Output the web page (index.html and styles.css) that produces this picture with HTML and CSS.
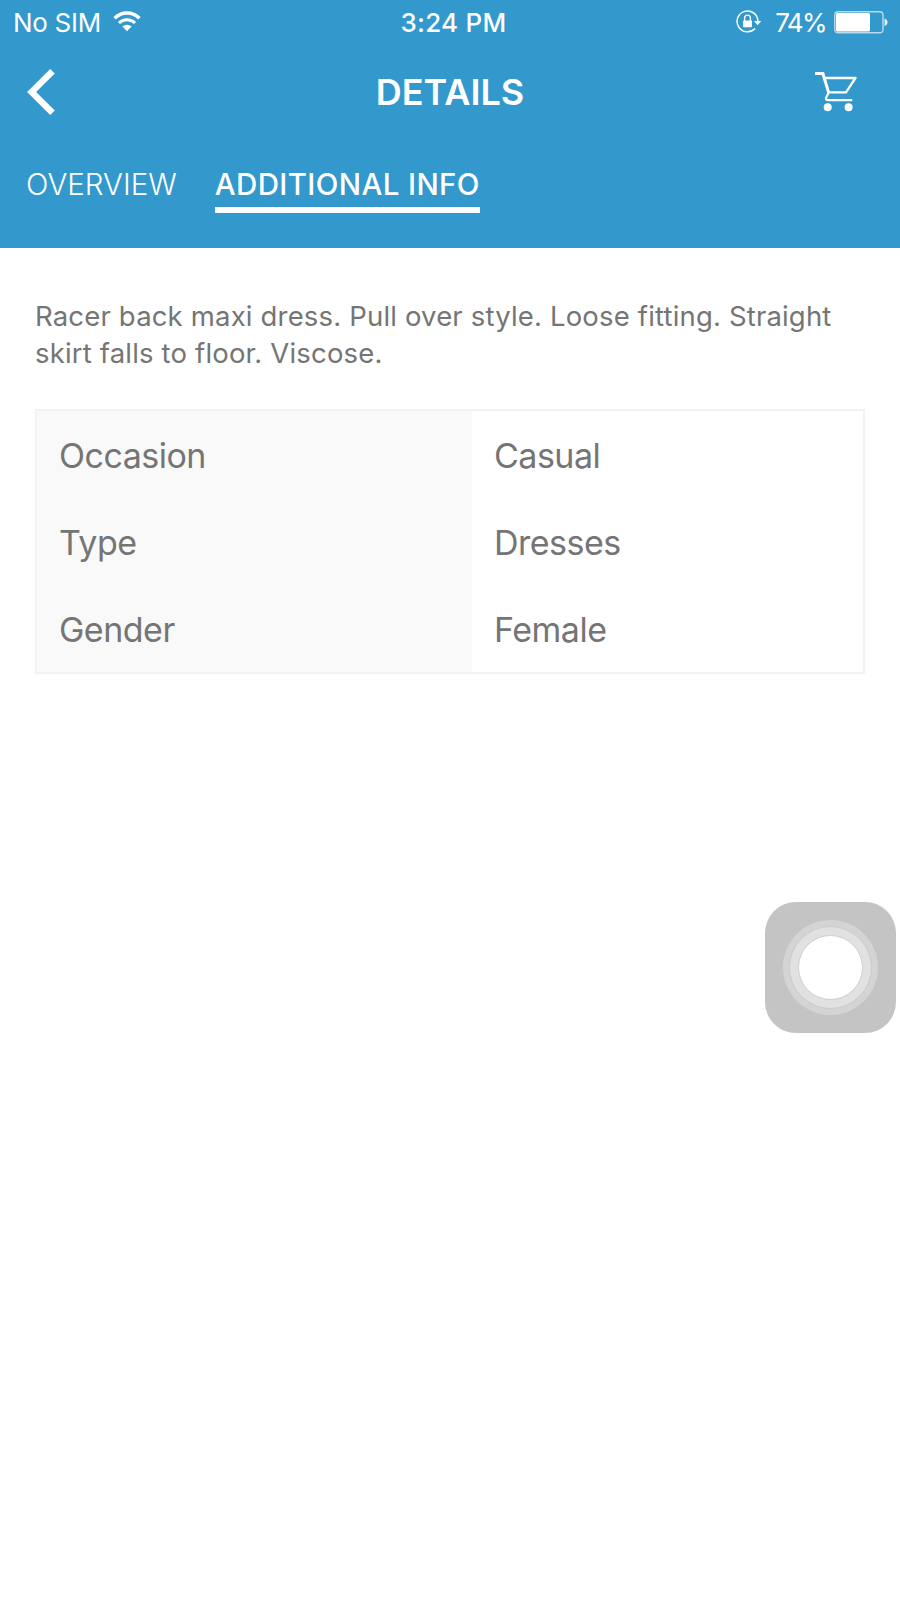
FILE: index.html
```html
<!DOCTYPE html>
<html lang="en">

<head>
    <meta charset="UTF-8">
    <meta name="viewport" content="width=device-width, initial-scale=1.0">
    <title>Details</title>
    <link rel="stylesheet" href="styles.css">
</head>

<body>
    <header class="header">
        <div class="status-bar">
            <div class="status-left">
                <span class="carrier">No SIM</span>
                <svg class="wifi" width="28" height="22" viewBox="0 0 28 22">
                    <path d="M1.6 7.2a17.3 17.3 0 0 1 24.8 0" fill="none" stroke="#fff" stroke-width="3.4"/>
                    <path d="M6 12a11.3 11.3 0 0 1 16 0" fill="none" stroke="#fff" stroke-width="3"/>
                    <path d="M9.4 15.6a6.6 6.6 0 0 1 9.2 0L14 20.3z" fill="#fff"/>
                </svg>
            </div>
            <span class="clock">3:24 PM</span>
            <div class="status-right">
                <svg class="lock" width="26" height="24" viewBox="0 0 26 24">
                    <path d="M19.1 18.5A10.4 10.4 0 1 1 21.9 11.5" fill="none" stroke="#fff" stroke-width="1.5"/>
                    <path d="M18 11h7.2l-3.6 4.2z" fill="#fff"/>
                    <rect x="7.1" y="10.6" width="8.8" height="6.6" rx="0.6" fill="#fff"/>
                    <path d="M8.6 11V8a2.9 2.9 0 0 1 5.8 0v3" fill="none" stroke="#fff" stroke-width="1.4"/>
                </svg>
                <span class="percent">74%</span>
                <svg class="battery" width="54" height="23" viewBox="0 0 54 23">
                    <rect x="0.8" y="0.8" width="48.2" height="21" rx="3.4" fill="none" stroke="#fff" stroke-opacity="0.65" stroke-width="1.4"/>
                    <rect x="2" y="2" width="34" height="18.6" rx="1.5" fill="#fff"/>
                    <path d="M50.5 7.5c4 .8 4 6.7 0 7.5z" fill="#fff" fill-opacity="0.85"/>
                </svg>
            </div>
        </div>

        <div class="nav-bar">
            <svg class="back" width="28" height="46" viewBox="0 0 28 46">
                <path d="M25.5 2.2L4.6 23l20.9 20.8" fill="none" stroke="#fff" stroke-width="6.4"/>
            </svg>
            <h1 class="title">DETAILS</h1>
            <svg class="cart" width="42" height="42" viewBox="0 0 42 42">
                <path d="M0 2.5h7.9l5.9 19.6" fill="none" stroke="#fff" stroke-width="3"/>
                <path d="M9 7h31.5l-9.5 14.3H13.800l-2.500 5c-.9 2 .2 2.900 2 2.900H37.300" fill="none" stroke="#fff" stroke-width="2.300" stroke-linejoin="round"/>
                <circle cx="12.7" cy="36.2" r="4" fill="#fff"/>
                <circle cx="33.6" cy="36.2" r="4" fill="#fff"/>
            </svg>
        </div>

        <nav class="tabs">
            <a class="tab">OVERVIEW</a>
            <a class="tab active">ADDITIONAL INFO</a>
        </nav>
    </header>

    <main class="content">
        <p class="description">Racer back maxi dress. Pull over style. Loose fitting. Straight<br>skirt falls to floor. Viscose.</p>

        <dl class="info">
            <dt>Occasion</dt>
            <dd>Casual</dd>
            <dt>Type</dt>
            <dd>Dresses</dd>
            <dt>Gender</dt>
            <dd>Female</dd>
        </dl>
    </main>

    <!-- floating assistive button -->
    <div class="assistive">
        <div class="ring-outer">
            <div class="ring-inner">
                <div class="dot"></div>
            </div>
        </div>
    </div>
</body>

</html>
```

FILE: styles.css
```css
* {
  box-sizing: border-box;
}

body {
  margin: 0;
  min-height: 1600px;
  background-color: #fff;
  color: #757575;
  font-family: Inter, "Liberation Sans", sans-serif;
}

svg {
  display: block;
  flex: none;
}

.header {
  height: 248px;
  background-color: #3398cc;
  color: #fff;
}

.status-bar {
  display: grid;
  grid-template-columns: 1fr auto 1fr;
  height: 46px;
  padding: 0 12px 0 13px;
  font-size: 26px;
  line-height: 46px;
}

.status-left,
.status-right {
  display: flex;
}

.status-right {
  justify-content: flex-end;
}

.carrier {
  letter-spacing: -0.3px;
}

.wifi {
  margin: 11px 0 0 12px;
}

.clock {
  padding-left: 6px;
  font-weight: 500;
  letter-spacing: 0.25px;
}

.lock {
  margin: 10px 13px 0 0;
}

.percent {
  letter-spacing: -1.6px;
}

.battery {
  margin: 11px 0 0 8px;
}

.nav-bar {
  display: grid;
  grid-template-columns: 1fr auto 1fr;
  align-items: center;
  height: 92px;
  padding: 0 43px 0 27px;
}

.title {
  margin: 0;
  padding: 0 0 1px 16px;
  font-size: 36px;
  font-weight: 600;
}

.cart {
  justify-self: end;
}

.tabs {
  display: flex;
  gap: 38px;
  padding: 24px 26px 0;
}

.tab {
  height: 51px;
  font-size: 29.5px;
  font-weight: 300;
  line-height: 44px;
  white-space: nowrap;
}

.active {
  font-weight: 500;
  letter-spacing: 0.37px;
  border-bottom: 6px solid #fff;
}

.content {
  padding: 50px 35px 0;
}

.description {
  margin: 0 0 37px;
  font-size: 27.5px;
  line-height: 37px;
  letter-spacing: 0.17px;
  white-space: nowrap;
}

.info {
  display: grid;
  grid-template-columns: 435px 1fr;
  grid-auto-rows: 87px;
  margin: 0;
  border: 2px solid #f2f2f2;
  font-size: 34px;
  line-height: 89px;
  letter-spacing: -0.5px;
}

.info dt {
  padding-left: 22px;
  background-color: #f9f9f9;
}

/* keeps the taller line box inside its row */
.info dt,
.info dd {
  height: 87px;
}

.info dd {
  margin: 0;
  padding-left: 22px;
}

.assistive {
  position: absolute;
  top: 902px;
  left: 765px;
  display: flex;
  align-items: center;
  justify-content: center;
  width: 131px;
  height: 131px;
  border-radius: 31px;
  background-color: #c4c4c4;
}

.ring-outer,
.ring-inner {
  display: flex;
  align-items: center;
  justify-content: center;
  border-radius: 50%;
}

.ring-outer {
  width: 95px;
  height: 95px;
  background-color: #d4d4d4;
}

.ring-inner {
  width: 83px;
  height: 83px;
  border: 1px solid #cbcbcb;
  background-color: #e1e1e1;
}

.dot {
  width: 65px;
  height: 65px;
  border: 1px solid #cfcfcf;
  border-radius: 50%;
  background-color: #fff;
}
```
